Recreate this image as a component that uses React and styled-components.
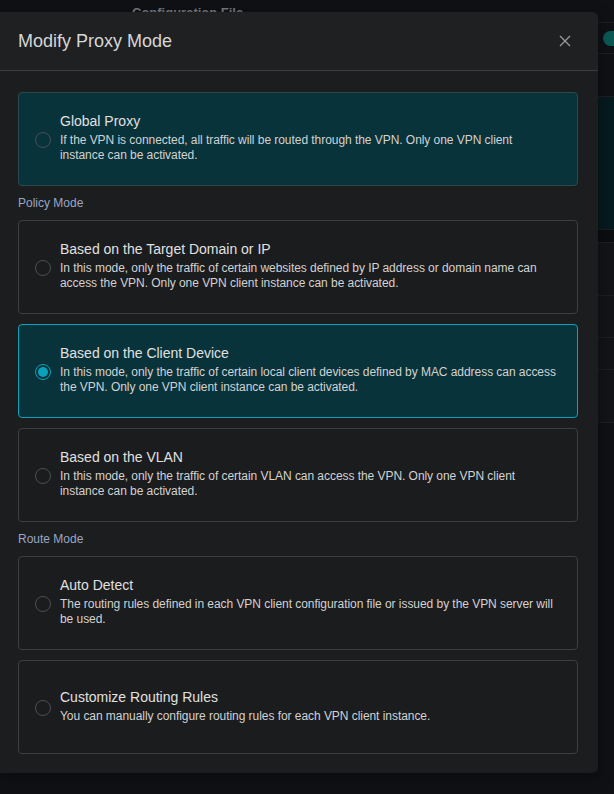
import styled, { createGlobalStyle } from "styled-components";

const GlobalStyle = createGlobalStyle`
  html, body {
    margin: 0;
    padding: 0;
    background: #0f1115;
    font-family: "Liberation Sans", Arial, sans-serif;
  }
`;

const Page = styled.div`
  position: relative;
  width: 614px;
  height: 794px;
  overflow: hidden;
  background: #0f1115;
`;

const Table = styled.div`
  display: flex;
  flex-direction: column;
`;

const HeadRow = styled.div`
  display: flex;
  height: 23px;
  border-bottom: 1px solid #1c1f24;
  color: #777a80;
  font-size: 13px;
  font-weight: bold;
  align-items: flex-start;
  padding-top: 5px;
  box-sizing: border-box;
`;

const HeadCell = styled.div`
  width: ${(p) => p.$w}px;
  flex-shrink: 0;
  white-space: nowrap;
  overflow: hidden;
  padding-left: ${(p) => p.$pl || 0}px;
`;

const Row = styled.div`
  height: ${(p) => p.$h}px;
  background: ${(p) => p.$bg || "transparent"};
  border-bottom: 1px solid #1c1f24;
  display: flex;
  align-items: center;
  justify-content: flex-end;
  box-sizing: border-box;
`;

const Pill = styled.div`
  width: 26px;
  height: 15px;
  border-radius: 8px;
  background: #0b5a55;
  margin-right: -15px;
`;

const Modal = styled.div`
  position: absolute;
  left: 0;
  top: 12px;
  width: 598px;
  height: 761px;
  background: #1c1d1f;
  border-radius: 0 6px 6px 0;
  display: flex;
  flex-direction: column;
  box-shadow: 0 4px 16px rgba(0, 0, 0, 0.4);
`;

const Header = styled.div`
  height: 59px;
  display: flex;
  align-items: center;
  justify-content: space-between;
  padding: 0 26px 0 18px;
  border-bottom: 1px solid #3a3b3e;
  box-sizing: border-box;
  background: #1f2022;
  border-radius: 0 6px 0 0;
`;

const Title = styled.div`
  font-size: 18px;
  color: #d6d6d6;
`;

const Close = styled.button`
  background: none;
  border: none;
  padding: 0;
  width: 14px;
  height: 14px;
  display: flex;
  cursor: pointer;
`;

const Body = styled.div`
  padding: 21px 20px 0 18px;
  display: flex;
  flex-direction: column;
`;

const Section = styled.div`
  font-size: 12px;
  color: #9aa6c4;
  height: 35px;
  display: flex;
  align-items: center;
  margin-top: -1px;
`;

const Card = styled.label`
  display: flex;
  align-items: center;
  gap: 9px;
  height: 94px;
  box-sizing: border-box;
  padding: 0 16px;
  border-radius: 4px;
  border: 1px solid ${(p) => (p.$active ? "#0ba3bd" : p.$tinted ? "#2d484d" : "#3d3e41")};
  background: ${(p) => (p.$tinted || p.$active ? "#09333b" : "#1b1c1e")};
  margin-bottom: ${(p) => (p.$last ? 0 : 10)}px;
  cursor: pointer;
`;

const Radio = styled.span`
  width: 16px;
  height: 16px;
  border-radius: 50%;
  box-sizing: border-box;
  border: 1px solid ${(p) => (p.$checked ? "#0aa2bb" : "#4c4e52")};
  flex-shrink: 0;
  display: flex;
  align-items: center;
  justify-content: center;
  margin-top: 1px;

  &::after {
    content: "";
    display: ${(p) => (p.$checked ? "block" : "none")};
    width: 10px;
    height: 10px;
    border-radius: 50%;
    background: #0aa2bb;
  }
`;

const Text = styled.div`
  display: flex;
  flex-direction: column;
  padding-bottom: 3px;
`;

const CardTitle = styled.div`
  font-size: 14px;
  line-height: 18px;
  color: #e0e0e0;
  margin-bottom: 3px;
`;

const Desc = styled.div`
  font-size: 12px;
  line-height: 15px;
  color: #d2d2d2;
  white-space: nowrap;
  letter-spacing: -0.05px;
`;

function Option({ title, desc, checked, tinted, last }) {
  return (
    <Card $active={checked} $tinted={tinted} $last={last}>
      <Radio $checked={checked} />
      <Text>
        <CardTitle>{title}</CardTitle>
        <Desc>{desc}</Desc>
      </Text>
    </Card>
  );
}

function App() {
  return (
    <>
      <GlobalStyle />
      <Page>
        <Table>
          <HeadRow>
            <HeadCell $w={598} $pl={132}>Configuration File</HeadCell>
            <HeadCell $w={16}>En</HeadCell>
          </HeadRow>
          <Row $h={31}>
            <Pill />
          </Row>
          <Row $h={43} />
          <Row $h={133} $bg="#061b20" />
          <Row $h={13} $bg="#0c0d10" />
          <Row $h={53} $bg="#121418" />
          <Row $h={42} $bg="#121418" />
          <Row $h={32} $bg="#121418" />
          <Row $h={53} $bg="#121418" />
        </Table>

        <Modal>
          <Header>
            <Title>Modify Proxy Mode</Title>
            <Close aria-label="Close">
              <svg width="14" height="14" viewBox="0 0 14 14">
                <path d="M2 2L12 12M12 2L2 12" stroke="#9a9a9a" strokeWidth="1.3" fill="none" />
              </svg>
            </Close>
          </Header>
          <Body>
            <Option
              tinted
              last
              title="Global Proxy"
              desc={
                <>
                  If the VPN is connected, all traffic will be routed through the VPN. Only one VPN client
                  <br />
                  instance can be activated.
                </>
              }
            />
            <Section>Policy Mode</Section>
            <Option
              title="Based on the Target Domain or IP"
              desc={
                <>
                  In this mode, only the traffic of certain websites defined by IP address or domain name can
                  <br />
                  access the VPN. Only one VPN client instance can be activated.
                </>
              }
            />
            <Option
              checked
              title="Based on the Client Device"
              desc={
                <>
                  In this mode, only the traffic of certain local client devices defined by MAC address can access
                  <br />
                  the VPN. Only one VPN client instance can be activated.
                </>
              }
            />
            <Option
              last
              title="Based on the VLAN"
              desc={
                <>
                  In this mode, only the traffic of certain VLAN can access the VPN. Only one VPN client
                  <br />
                  instance can be activated.
                </>
              }
            />
            <Section>Route Mode</Section>
            <Option
              title="Auto Detect"
              desc={
                <>
                  The routing rules defined in each VPN client configuration file or issued by the VPN server will
                  <br />
                  be used.
                </>
              }
            />
            <Option
              last
              title="Customize Routing Rules"
              desc="You can manually configure routing rules for each VPN client instance."
            />
          </Body>
        </Modal>
      </Page>
    </>
  );
}

export default App;
